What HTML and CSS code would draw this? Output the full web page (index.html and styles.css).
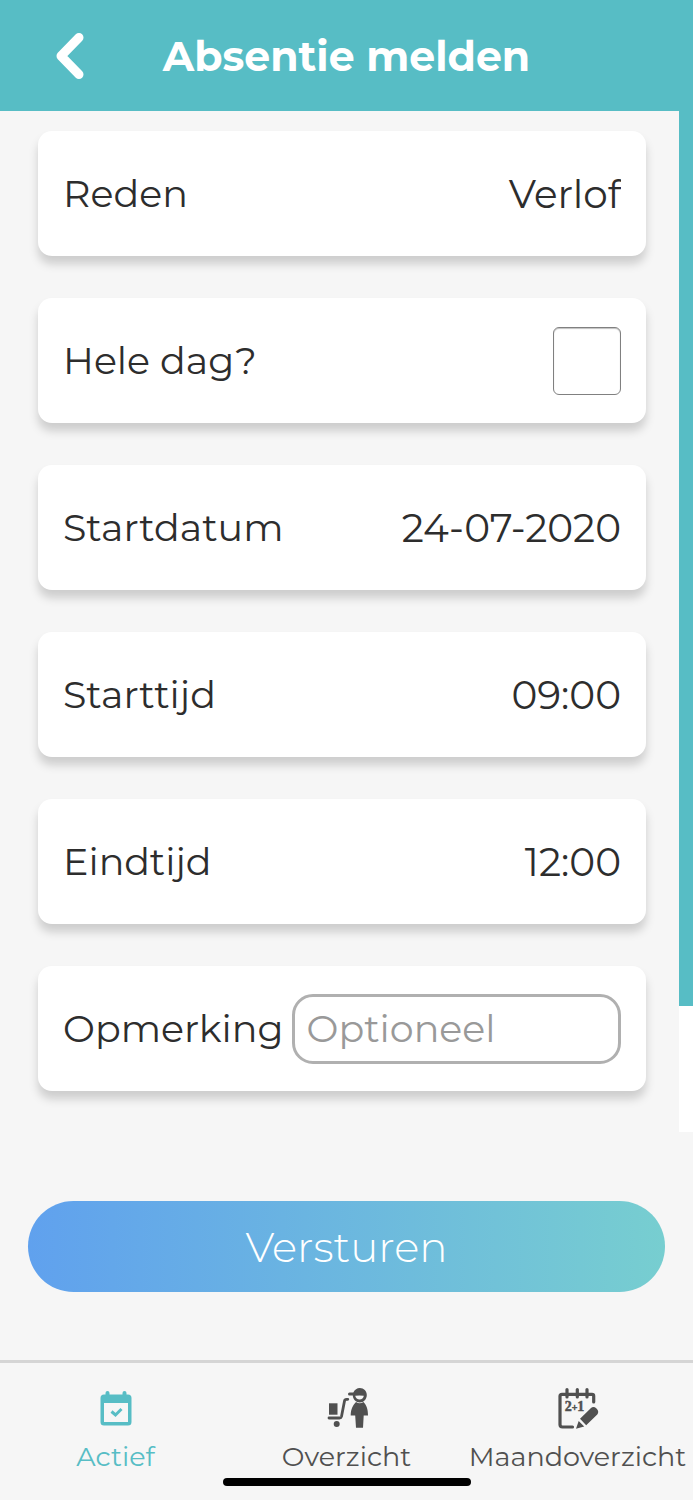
FILE: index.html
```html
<!DOCTYPE html>
<html lang="nl">
<head>
<meta charset="utf-8">
<meta name="viewport" content="width=device-width, initial-scale=1">
<title>Absentie melden</title>
<link rel="stylesheet" href="styles.css">
</head>
<body>
<div class="app">
  <header class="header">
    <button class="back" type="button" aria-label="Terug">
      <svg width="36" height="52" viewBox="0 0 36 52" fill="none" stroke="currentColor" stroke-width="9" stroke-linecap="round" stroke-linejoin="round"><path d="M27 7.500 L9 26 L27 44.500"/></svg>
    </button>
    <h1 class="title">Absentie melden</h1>
  </header>
  <form class="form" id="absence">
    <div class="fields">
      <div class="card"><label for="reason">Reden</label><select class="value" id="reason"><option>Verlof</option></select></div>
      <div class="card"><label for="allday">Hele dag?</label><input class="check" id="allday" type="checkbox"></div>
      <div class="card"><label for="date">Startdatum</label><input class="value" id="date" type="text" value="24-07-2020"></div>
      <div class="card"><label for="start">Starttijd</label><input class="value" id="start" type="text" value="09:00"></div>
      <div class="card"><label for="end">Eindtijd</label><input class="value" id="end" type="text" value="12:00"></div>
      <div class="card"><label for="remark">Opmerking</label><input class="remark" id="remark" type="text" placeholder="Optioneel"></div>
    </div>
    <div class="edge"></div>
  </form>
  <div class="actions"><button class="submit" type="submit" form="absence">Versturen</button></div>
  <footer class="footer">
    <nav class="tabs">
      <a class="tab active" href="#actief">
        <svg class="icon" viewBox="0 0 40 40" fill="currentColor"><path fill-rule="evenodd" d="M11.500 2a2 2 0 0 1 2 2v1.500h13V4a2 2 0 0 1 4 0v1.500h1.500a3.500 3.500 0 0 1 3.500 3.500v24a3.500 3.500 0 0 1-3.500 3.500H8A3.500 3.500 0 0 1 4.500 33V9A3.500 3.500 0 0 1 8 5.500h1.500V4a2 2 0 0 1 2-2ZM8 14v19h24V14Z"/><path d="M15.500 22.500 19.500 26 25.500 20" fill="none" stroke="currentColor" stroke-width="3"/></svg>
        <span>Actief</span>
      </a>
      <a class="tab" href="#overzicht">
        <svg class="icon" viewBox="0 0 40 40" fill="currentColor"><path d="M2 14.300h8.500v11.400H2Z"/><path d="M2 29h10.500q1.600 0 2-1.500l3-15.500q.3-1.700 2-1.700h1.300" fill="none" stroke="currentColor" stroke-width="2.800" stroke-linecap="round"/><circle cx="9.700" cy="35" r="3"/><path fill-rule="evenodd" d="M22.500 3.500h3.800C27.800.5 30-1 32.800-1c4 0 7 3 7 7s-3 7.500-7 7.500c-3.800 0-6.800-3-7-7h-3.300a1.500 1.500 0 0 1 0-3ZM28.200 6.800c.4 2.400 2.200 3.700 4.400 3.700s4-1.300 4.200-3.700q-4.300-.8-8.600 0Z"/><path d="M29 13q3.700 2.500 7.500 0c3 3 4.500 7 4.500 13.500h-4.300L36 38.800h-7l-.8-12.300H23.700C23.700 20 26 16 29 13Z"/></svg>
        <span>Overzicht</span>
      </a>
      <a class="tab" href="#maandoverzicht">
        <svg class="icon" viewBox="0 0 40 40" fill="currentColor"><path d="M35.700 13V7q0-1.700-1.700-1.700H4Q2 5.300 2 7.300V35.500Q2 38 4.500 38H14.500M9 .5V8M19.300.5V8M29 .5V8" fill="none" stroke="currentColor" stroke-width="3.200" stroke-linecap="round"/><text class="sum" x="16.500" y="22" text-anchor="middle">2<tspan class="plus">+</tspan>1</text><path d="M22 29.800 33 19q2.500-2 5.500.5 3 3 .8 6L28.200 36.300ZM20.700 32 26.200 37.500 18 39.700Z"/></svg>
        <span>Maandoverzicht</span>
      </a>
    </nav>
    <div class="home"></div>
  </footer>
</div>
</body>
</html>
```
FILE: styles.css
```css
* { box-sizing: border-box; }
body {
  margin: 0;
  background: #f6f6f6;
  color: #2d2d2d;
  font: 400 38px/48px Montserrat, Inter, sans-serif;
}
button, input, select { font: inherit; color: inherit; }
.app { display: flex; flex-direction: column; min-height: 100vh; }

.header {
  display: grid;
  grid-template-columns: 1fr auto 1fr;
  align-items: center;
  padding: 30px 52px 29px;
  background: #57bdc5;
  color: #fff;
}
.back { display: flex; justify-self: start; padding: 0; border: 0; background: none; }
.title { margin: 0; font-size: 41px; font-weight: 700; line-height: 52px; }

.form { display: flex; }
.fields {
  flex: 1;
  min-width: 0;
  display: flex;
  flex-direction: column;
  gap: 42px;
  padding: 20px 33px 41px 38px;
}
.card {
  display: flex;
  align-items: center;
  justify-content: space-between;
  gap: 8px;
  min-height: 125px;
  padding: 0 25px;
  background: #fff;
  border-radius: 14px;
  box-shadow: 0 8px 10px rgba(0, 0, 0, 0.17);
}
.value {
  flex: 1;
  min-width: 0;
  padding: 0;
  border: 0;
  background: none;
  font-size: 39px;
  text-align: right;
  text-align-last: right;
  appearance: none;
}
.check {
  width: 68px;
  height: 68px;
  margin: 0;
  appearance: none;
  border: 1px solid #808080;
  border-radius: 6px;
  background: #fff;
  box-shadow: inset 0 1px 1px rgba(0, 0, 0, 0.25);
}
.remark {
  flex: 1;
  min-width: 0;
  height: 70px;
  padding: 0 12px;
  border: 3px solid #b0b0b0;
  border-radius: 21px;
  background: #fff;
}
.remark::placeholder { color: #999; opacity: 1; }
.edge { width: 14px; background: linear-gradient(#57bdc5 895px, #fff 895px); }

.actions { padding: 69px 28px 68px; }
.submit {
  display: block;
  width: 100%;
  height: 91px;
  border: 0;
  border-radius: 46px;
  background: linear-gradient(90deg, #60a1ee, #77ced0);
  color: #fff;
  font-size: 42px;
  font-weight: 300;
}

.footer { margin-top: auto; padding-bottom: 14px; border-top: 3px solid #d5d5d5; }
.tabs { display: grid; grid-template-columns: repeat(3, minmax(0, 1fr)); padding-top: 26px; }
.tab {
  display: flex;
  flex-direction: column;
  align-items: center;
  gap: 12px;
  color: #505050;
  font-size: 27px;
  line-height: 32px;
  text-decoration: none;
}
.active { color: #57bdc5; }
.icon { width: 40px; height: 40px; overflow: visible; }
.sum { font: 700 14px "Liberation Serif", serif; stroke: currentColor; stroke-width: 0.5px; }
.plus { font-size: 10px; }
.home { width: 248px; height: 8px; margin: 5px auto 0; border-radius: 4px; background: #000; }
```
